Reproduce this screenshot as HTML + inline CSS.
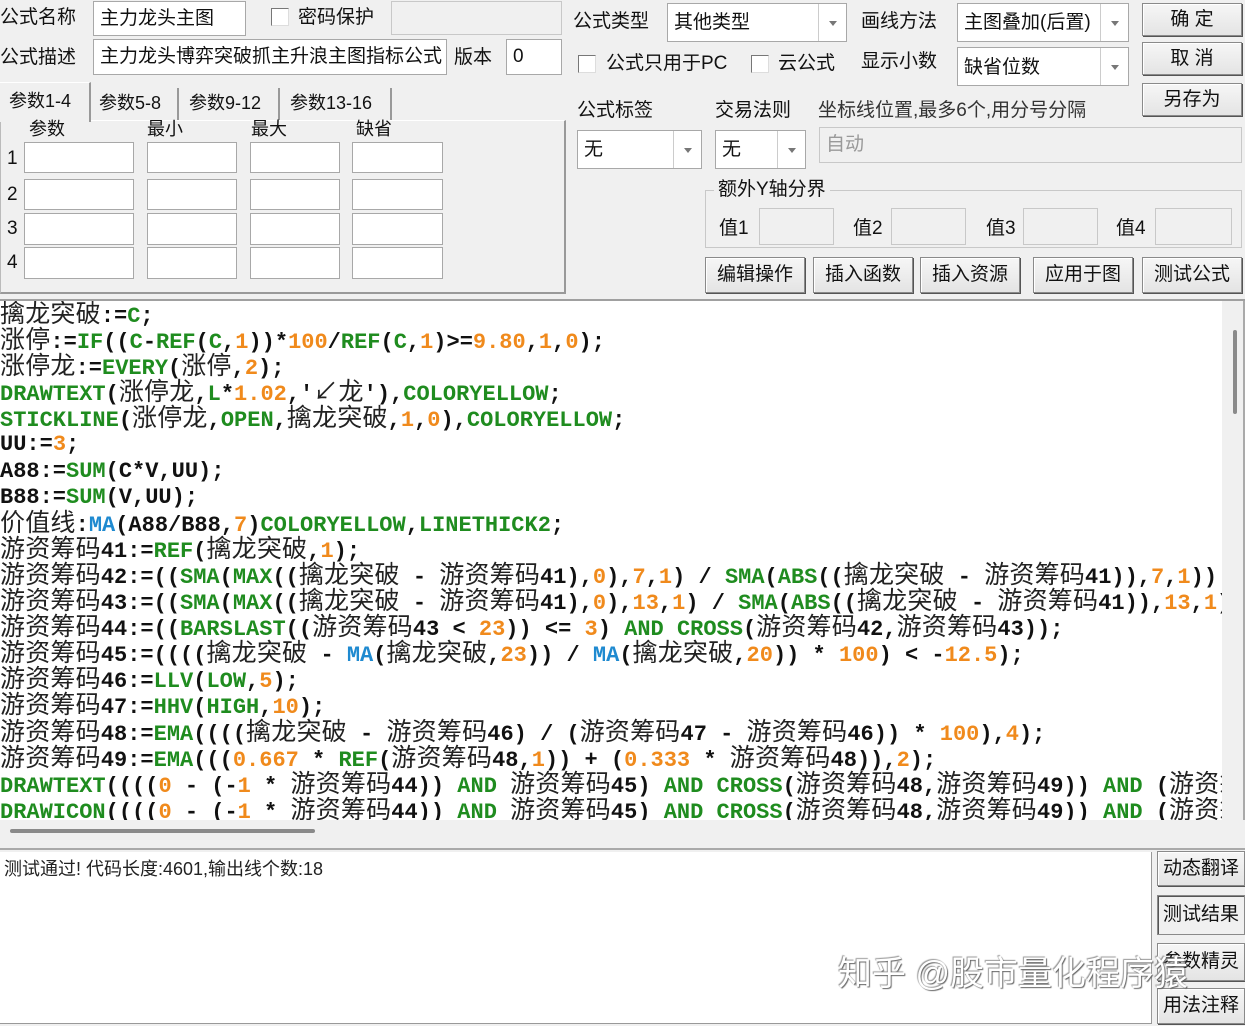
<!DOCTYPE html>
<html><head><meta charset="utf-8">
<style>
*{box-sizing:border-box;margin:0;padding:0}
body{width:1245px;height:1026px;background:#f0f0f0;position:relative;overflow:hidden;font-family:"Liberation Sans","Noto Sans CJK SC",sans-serif;font-size:19px;color:#111}
.a{position:absolute}
.lb{position:absolute;white-space:nowrap;line-height:1}
.in{position:absolute;background:#fff;border:1px solid #a8a8a8;white-space:nowrap;overflow:hidden;padding-left:6px;font-size:19px}
.dis{background:#f0f0f0;border:1px solid #c8c8c8}
.cb{position:absolute;width:18px;height:18px;background:#fff;border:1px solid #777;border-right-color:#ddd;border-bottom-color:#ddd}
.combo{position:absolute;background:#fff;border:1px solid #a8a8a8;padding-left:6px;white-space:nowrap}
.combo .dd{position:absolute;right:0;top:0;bottom:0;width:28px;border-left:1px solid #ccc}
.combo .dd:after{content:"";position:absolute;left:10px;top:50%;margin-top:-2px;border:4px solid transparent;border-top:5px solid #777}
.btn{position:absolute;background:linear-gradient(#f6f6f6,#e4e4e4);border:1px solid #8a8a8a;box-shadow:inset 1px 1px 0 #fff,1px 1px 0 #555;text-align:center;white-space:nowrap}
#code{position:absolute;left:0;top:299px;width:1245px;height:521px;background:#fff;border-top:2px solid #a0a0a0;overflow:hidden}
#lines{position:absolute;left:0;top:1px;font-family:"Liberation Mono",monospace;font-weight:bold;font-size:22px;white-space:nowrap;color:#111}
#lines div{height:26.1px;line-height:26.1px;overflow:visible}
#lines i{font-style:normal;font-weight:normal;font-family:"Noto Sans CJK SC",sans-serif;font-size:25px;line-height:20px;color:#222;letter-spacing:0.2px}
#lines b{color:#1f8c1f}
#lines u{text-decoration:none;color:#f08a1c}
#lines s{text-decoration:none;color:#1f8ad0}
</style></head><body>

<div class="lb" style="left:0;top:8px">公式名称</div>
<div class="in" style="left:93px;top:1px;width:153px;height:35px;line-height:33px">主力龙头主图</div>
<div class="cb" style="left:271px;top:8px"></div>
<div class="lb" style="left:298px;top:8px">密码保护</div>
<div class="in dis" style="left:391px;top:1px;width:171px;height:34px"></div>
<div class="lb" style="left:0;top:48px">公式描述</div>
<div class="in" style="left:93px;top:39px;width:354px;height:36px;line-height:34px">主力龙头博弈突破抓主升浪主图指标公式</div>
<div class="lb" style="left:454px;top:48px">版本</div>
<div class="in" style="left:506px;top:39px;width:56px;height:36px;line-height:34px">0</div>

<div class="a" style="left:0;top:120px;width:566px;height:174px;border:1px solid #bbb;border-top-color:#fff;border-right:2px solid #999;border-bottom:2px solid #999;background:#f0f0f0"></div>
<div class="a" style="left:0;top:82px;width:91px;height:40px;background:#f0f0f0;border-right:2px solid #999;border-top:1px solid #fff"></div>
<div class="lb" style="left:9px;top:92px;font-size:18px">参数1-4</div>
<div class="a" style="left:93px;top:88px;width:86px;height:32px;border-right:2px solid #999"></div>
<div class="lb" style="left:99px;top:94px;font-size:18px">参数5-8</div>
<div class="a" style="left:181px;top:88px;width:99px;height:32px;border-right:2px solid #999"></div>
<div class="lb" style="left:189px;top:94px;font-size:18px">参数9-12</div>
<div class="a" style="left:282px;top:88px;width:110px;height:32px;border-right:2px solid #999"></div>
<div class="lb" style="left:290px;top:94px;font-size:18px">参数13-16</div>
<div class="lb" style="left:29px;top:120px;font-size:18px">参数</div>
<div class="lb" style="left:147px;top:120px;font-size:18px">最小</div>
<div class="lb" style="left:251px;top:120px;font-size:18px">最大</div>
<div class="lb" style="left:356px;top:120px;font-size:18px">缺省</div>

<div class="lb" style="left:7px;top:149px">1</div>
<div class="lb" style="left:7px;top:185px">2</div>
<div class="lb" style="left:7px;top:219px">3</div>
<div class="lb" style="left:7px;top:253px">4</div>
<div class="in" style="left:24px;top:142px;width:110px;height:31px"></div>
<div class="in" style="left:147px;top:142px;width:90px;height:31px"></div>
<div class="in" style="left:250px;top:142px;width:90px;height:31px"></div>
<div class="in" style="left:352px;top:142px;width:91px;height:31px"></div>
<div class="in" style="left:24px;top:179px;width:110px;height:31px"></div>
<div class="in" style="left:147px;top:179px;width:90px;height:31px"></div>
<div class="in" style="left:250px;top:179px;width:90px;height:31px"></div>
<div class="in" style="left:352px;top:179px;width:91px;height:31px"></div>
<div class="in" style="left:24px;top:213px;width:110px;height:32px"></div>
<div class="in" style="left:147px;top:213px;width:90px;height:32px"></div>
<div class="in" style="left:250px;top:213px;width:90px;height:32px"></div>
<div class="in" style="left:352px;top:213px;width:91px;height:32px"></div>
<div class="in" style="left:24px;top:247px;width:110px;height:32px"></div>
<div class="in" style="left:147px;top:247px;width:90px;height:32px"></div>
<div class="in" style="left:250px;top:247px;width:90px;height:32px"></div>
<div class="in" style="left:352px;top:247px;width:91px;height:32px"></div>

<div class="lb" style="left:573px;top:12px">公式类型</div>
<div class="combo" style="left:667px;top:3px;width:180px;height:39px;line-height:37px">其他类型<span class="dd"></span></div>
<div class="lb" style="left:861px;top:12px">画线方法</div>
<div class="combo" style="left:957px;top:3px;width:172px;height:39px;line-height:37px">主图叠加(后置)<span class="dd"></span></div>
<div class="btn" style="left:1142px;top:3px;width:100px;height:33px;line-height:31px">确 定</div>
<div class="btn" style="left:1142px;top:42px;width:100px;height:33px;line-height:31px">取 消</div>
<div class="btn" style="left:1142px;top:83px;width:100px;height:33px;line-height:31px">另存为</div>

<div class="cb" style="left:578px;top:55px"></div>
<div class="lb" style="left:606px;top:54px">公式只用于PC</div>
<div class="cb" style="left:751px;top:55px"></div>
<div class="lb" style="left:778px;top:54px">云公式</div>
<div class="lb" style="left:861px;top:52px">显示小数</div>
<div class="combo" style="left:957px;top:47px;width:172px;height:39px;line-height:39px">缺省位数<span class="dd"></span></div>

<div class="lb" style="left:577px;top:101px">公式标签</div>
<div class="lb" style="left:715px;top:101px">交易法则</div>
<div class="lb" style="left:818px;top:101px;color:#333">坐标线位置,最多6个,用分号分隔</div>
<div class="combo" style="left:577px;top:130px;width:125px;height:39px;line-height:37px">无<span class="dd"></span></div>
<div class="combo" style="left:715px;top:130px;width:91px;height:39px;line-height:37px">无<span class="dd"></span></div>
<div class="in dis" style="left:819px;top:127px;width:423px;height:36px;line-height:34px;color:#999">自动</div>

<div class="a" style="left:705px;top:190px;width:537px;height:58px;border:1px solid #c8c8c8"></div>
<div class="lb" style="left:714px;top:180px;background:#f0f0f0;padding:0 4px">额外Y轴分界</div>
<div class="lb" style="left:719px;top:219px">值1</div>
<div class="in dis" style="left:759px;top:208px;width:75px;height:37px"></div>
<div class="lb" style="left:853px;top:219px">值2</div>
<div class="in dis" style="left:891px;top:208px;width:75px;height:37px"></div>
<div class="lb" style="left:986px;top:219px">值3</div>
<div class="in dis" style="left:1023px;top:208px;width:75px;height:37px"></div>
<div class="lb" style="left:1116px;top:219px">值4</div>
<div class="in dis" style="left:1155px;top:208px;width:77px;height:37px"></div>

<div class="btn" style="left:705px;top:257px;width:100px;height:36px;line-height:34px">编辑操作</div>
<div class="btn" style="left:813px;top:257px;width:100px;height:36px;line-height:34px">插入函数</div>
<div class="btn" style="left:920px;top:257px;width:100px;height:36px;line-height:34px">插入资源</div>
<div class="btn" style="left:1033px;top:257px;width:100px;height:36px;line-height:34px">应用于图</div>
<div class="btn" style="left:1142px;top:257px;width:100px;height:36px;line-height:34px">测试公式</div>

<div id="code">
<div id="lines"><div><i>擒龙突破</i>:=<b>C</b>;</div><div><i>涨停</i>:=<b>IF</b>((<b>C</b>-<b>REF</b>(<b>C</b>,<u>1</u>))*<u>100</u>/<b>REF</b>(<b>C</b>,<u>1</u>)&gt;=<u>9.80</u>,<u>1</u>,<u>0</u>);</div><div><i>涨停龙</i>:=<b>EVERY</b>(<i>涨停</i>,<u>2</u>);</div><div><b>DRAWTEXT</b>(<i>涨停龙</i>,<b>L</b>*<u>1.02</u>,'<i>↙龙</i>'),<b>COLORYELLOW</b>;</div><div><b>STICKLINE</b>(<i>涨停龙</i>,<b>OPEN</b>,<i>擒龙突破</i>,<u>1</u>,<u>0</u>),<b>COLORYELLOW</b>;</div><div>UU:=<u>3</u>;</div><div>A88:=<b>SUM</b>(C*V,UU);</div><div>B88:=<b>SUM</b>(V,UU);</div><div><i>价值线</i>:<s>MA</s>(A88/B88,<u>7</u>)<b>COLORYELLOW</b>,<b>LINETHICK2</b>;</div><div><i>游资筹码</i>41:=<b>REF</b>(<i>擒龙突破</i>,<u>1</u>);</div><div><i>游资筹码</i>42:=((<b>SMA</b>(<b>MAX</b>((<i>擒龙突破</i> - <i>游资筹码</i>41),<u>0</u>),<u>7</u>,<u>1</u>) / <b>SMA</b>(<b>ABS</b>((<i>擒龙突破</i> - <i>游资筹码</i>41)),<u>7</u>,<u>1</u>)) * <u>100</u>);</div><div><i>游资筹码</i>43:=((<b>SMA</b>(<b>MAX</b>((<i>擒龙突破</i> - <i>游资筹码</i>41),<u>0</u>),<u>13</u>,<u>1</u>) / <b>SMA</b>(<b>ABS</b>((<i>擒龙突破</i> - <i>游资筹码</i>41)),<u>13</u>,<u>1</u>)) * <u>100</u>);</div><div><i>游资筹码</i>44:=((<b>BARSLAST</b>((<i>游资筹码</i>43 &lt; <u>23</u>)) &lt;= <u>3</u>) <b>AND</b> <b>CROSS</b>(<i>游资筹码</i>42,<i>游资筹码</i>43));</div><div><i>游资筹码</i>45:=((((<i>擒龙突破</i> - <s>MA</s>(<i>擒龙突破</i>,<u>23</u>)) / <s>MA</s>(<i>擒龙突破</i>,<u>20</u>)) * <u>100</u>) &lt; -<u>12.5</u>);</div><div><i>游资筹码</i>46:=<b>LLV</b>(<b>LOW</b>,<u>5</u>);</div><div><i>游资筹码</i>47:=<b>HHV</b>(<b>HIGH</b>,<u>10</u>);</div><div><i>游资筹码</i>48:=<b>EMA</b>((((<i>擒龙突破</i> - <i>游资筹码</i>46) / (<i>游资筹码</i>47 - <i>游资筹码</i>46)) * <u>100</u>),<u>4</u>);</div><div><i>游资筹码</i>49:=<b>EMA</b>(((<u>0.667</u> * <b>REF</b>(<i>游资筹码</i>48,<u>1</u>)) + (<u>0.333</u> * <i>游资筹码</i>48)),<u>2</u>);</div><div><b>DRAWTEXT</b>((((<u>0</u> - (-<u>1</u> * <i>游资筹码</i>44)) <b>AND</b> <i>游资筹码</i>45) <b>AND</b> <b>CROSS</b>(<i>游资筹码</i>48,<i>游资筹码</i>49)) <b>AND</b> (<i>游资筹码</i>46</div><div><b>DRAWICON</b>((((<u>0</u> - (-<u>1</u> * <i>游资筹码</i>44)) <b>AND</b> <i>游资筹码</i>45) <b>AND</b> <b>CROSS</b>(<i>游资筹码</i>48,<i>游资筹码</i>49)) <b>AND</b> (<i>游资筹码</i>46</div></div>
<div class="a" style="left:1222px;top:0;width:23px;height:521px;background:#f0f0f0;border-right:2px solid #aaa"></div>
<div class="a" style="left:1233px;top:29px;width:4px;height:84px;background:#8a8a8a;border-radius:2px"></div>
</div>
<div class="a" style="left:0;top:820px;width:1245px;height:30px;background:#f0f0f0;border-bottom:2px solid #aaa"></div>
<div class="a" style="left:10px;top:829px;width:305px;height:4px;background:#8a8a8a;border-radius:2px"></div>

<div class="a" style="left:0;top:852px;width:1152px;height:172px;background:#fff;border-right:1px solid #999;border-bottom:1px solid #999"></div>
<div class="lb" style="left:4px;top:860px;font-size:18px;color:#222">测试通过! 代码长度:4601,输出线个数:18</div>
<div class="btn" style="left:1157px;top:851px;width:88px;height:35px;line-height:33px">动态翻译</div>
<div class="btn" style="left:1157px;top:895px;width:88px;height:40px;line-height:38px;background:#f0f0f0;box-shadow:inset 1px 1px 0 #555">测试结果</div>
<div class="btn" style="left:1157px;top:943px;width:88px;height:38px;line-height:36px">参数精灵</div>
<div class="btn" style="left:1157px;top:988px;width:88px;height:36px;line-height:34px">用法注释</div>
<div class="lb" style="left:838px;top:957px;font-size:34px;color:#fff;text-shadow:1px 1px 1px #666,-1px -1px 1px #999">知乎 @股市量化程序猿</div>
</body></html>
